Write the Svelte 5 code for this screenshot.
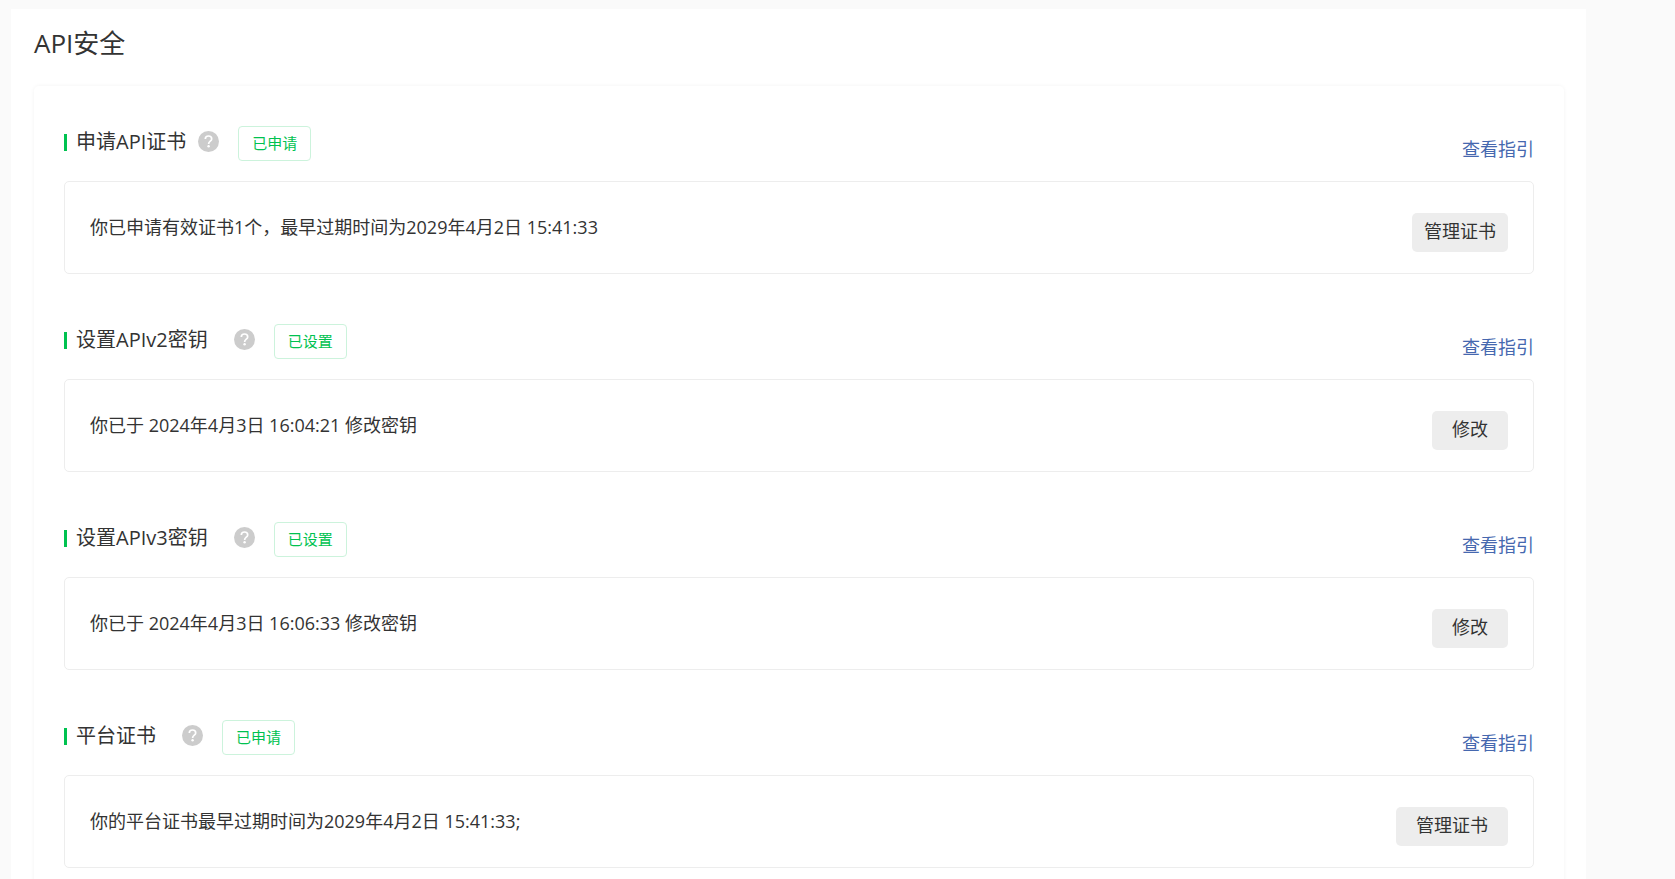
<script lang="ts">
	type Section = {
		title: string;
		status: string;
		message: string;
		action: string;
		tight?: boolean;
	};

	const sections: Section[] = [
		{
			title: '申请API证书',
			status: '已申请',
			message: '你已申请有效证书1个，最早过期时间为2029年4月2日 15:41:33',
			action: '管理证书',
			tight: true
		},
		{
			title: '设置APIv2密钥',
			status: '已设置',
			message: '你已于 2024年4月3日 16:04:21 修改密钥',
			action: '修改'
		},
		{
			title: '设置APIv3密钥',
			status: '已设置',
			message: '你已于 2024年4月3日 16:06:33 修改密钥',
			action: '修改'
		},
		{
			title: '平台证书',
			status: '已申请',
			message: '你的平台证书最早过期时间为2029年4月2日 15:41:33;',
			action: '管理证书'
		}
	];
</script>

<main class="page">
	<h1>API安全</h1>
	<div class="card">
		{#each sections as section}
			<section class:tight={section.tight}>
				<header>
					<h2>{section.title}</h2>
					<button class="help" type="button" aria-label="帮助">
						<svg viewBox="0 0 21 21" width="21" height="21" aria-hidden="true">
							<circle cx="10.5" cy="10.5" r="10.5" fill="#ccc" />
							<path
								d="M7.3 8.1C7.3 6.2 8.6 5 10.5 5S13.7 6.2 13.7 7.9C13.7 10 10.6 10.3 10.6 12.9"
								fill="none"
								stroke="#fff"
								stroke-width="1.7"
							/>
							<circle cx="10.6" cy="15.3" r="1.2" fill="#fff" />
						</svg>
					</button>
					<span class="tag">{section.status}</span>
					<a href="#guide">查看指引</a>
				</header>
				<div class="box">
					<p>{section.message}</p>
					<button class="action" type="button">{section.action}</button>
				</div>
			</section>
		{/each}
	</div>
</main>

<style>
	:global(body) {
		margin: 0;
		background: #fafafa;
	}

	.page {
		margin: 9px 89px 0 11px;
		padding: 17px 22px 40px 23px;
		background: #fff;
		color: #333;
		font-family: 'Open Sans', 'Noto Sans CJK SC', sans-serif;
		font-size: 18px;
	}

	h1,
	h2,
	p {
		margin: 0;
		font-weight: 400;
	}

	h1 {
		margin-bottom: 26px;
		font-size: 26px;
		line-height: 34px;
	}

	.card {
		display: flex;
		flex-direction: column;
		gap: 50px;
		padding: 40px 30px;
		border-radius: 5px;
		box-shadow: 0 0 4px rgba(0, 0, 0, 0.05);
	}

	header {
		display: flex;
		align-items: flex-start;
		margin-bottom: 20px;
	}

	h2 {
		display: flex;
		align-items: center;
		gap: 9px;
		font-size: 20px;
		line-height: 32px;
	}

	h2::before {
		content: '';
		width: 3px;
		height: 17px;
		background: #00c250;
	}

	.help {
		display: flex;
		margin: 5px 19px 0 26px;
		padding: 0;
		border: 0;
		background: none;
		cursor: pointer;
	}

	.tight .help {
		margin-left: 12px;
	}

	.tag {
		padding: 0 13px;
		border: 1px solid #ccf3dc;
		border-radius: 4px;
		color: #00c250;
		font-size: 15px;
		line-height: 33px;
	}

	a {
		align-self: flex-end;
		margin-left: auto;
		color: #4668af;
		line-height: 24px;
		text-decoration: none;
	}

	.box {
		display: flex;
		align-items: flex-start;
		justify-content: space-between;
		padding: 31px 25px 21px;
		border: 1px solid #ededed;
		border-radius: 5px;
	}

	p {
		line-height: 28px;
	}

	.action {
		padding: 0 20px 2px;
		border: 0;
		border-radius: 5px;
		background: #ededed;
		color: #333;
		font: inherit;
		line-height: 37px;
		cursor: pointer;
	}

	.tight .action {
		padding: 0 12px 2px;
	}
</style>
